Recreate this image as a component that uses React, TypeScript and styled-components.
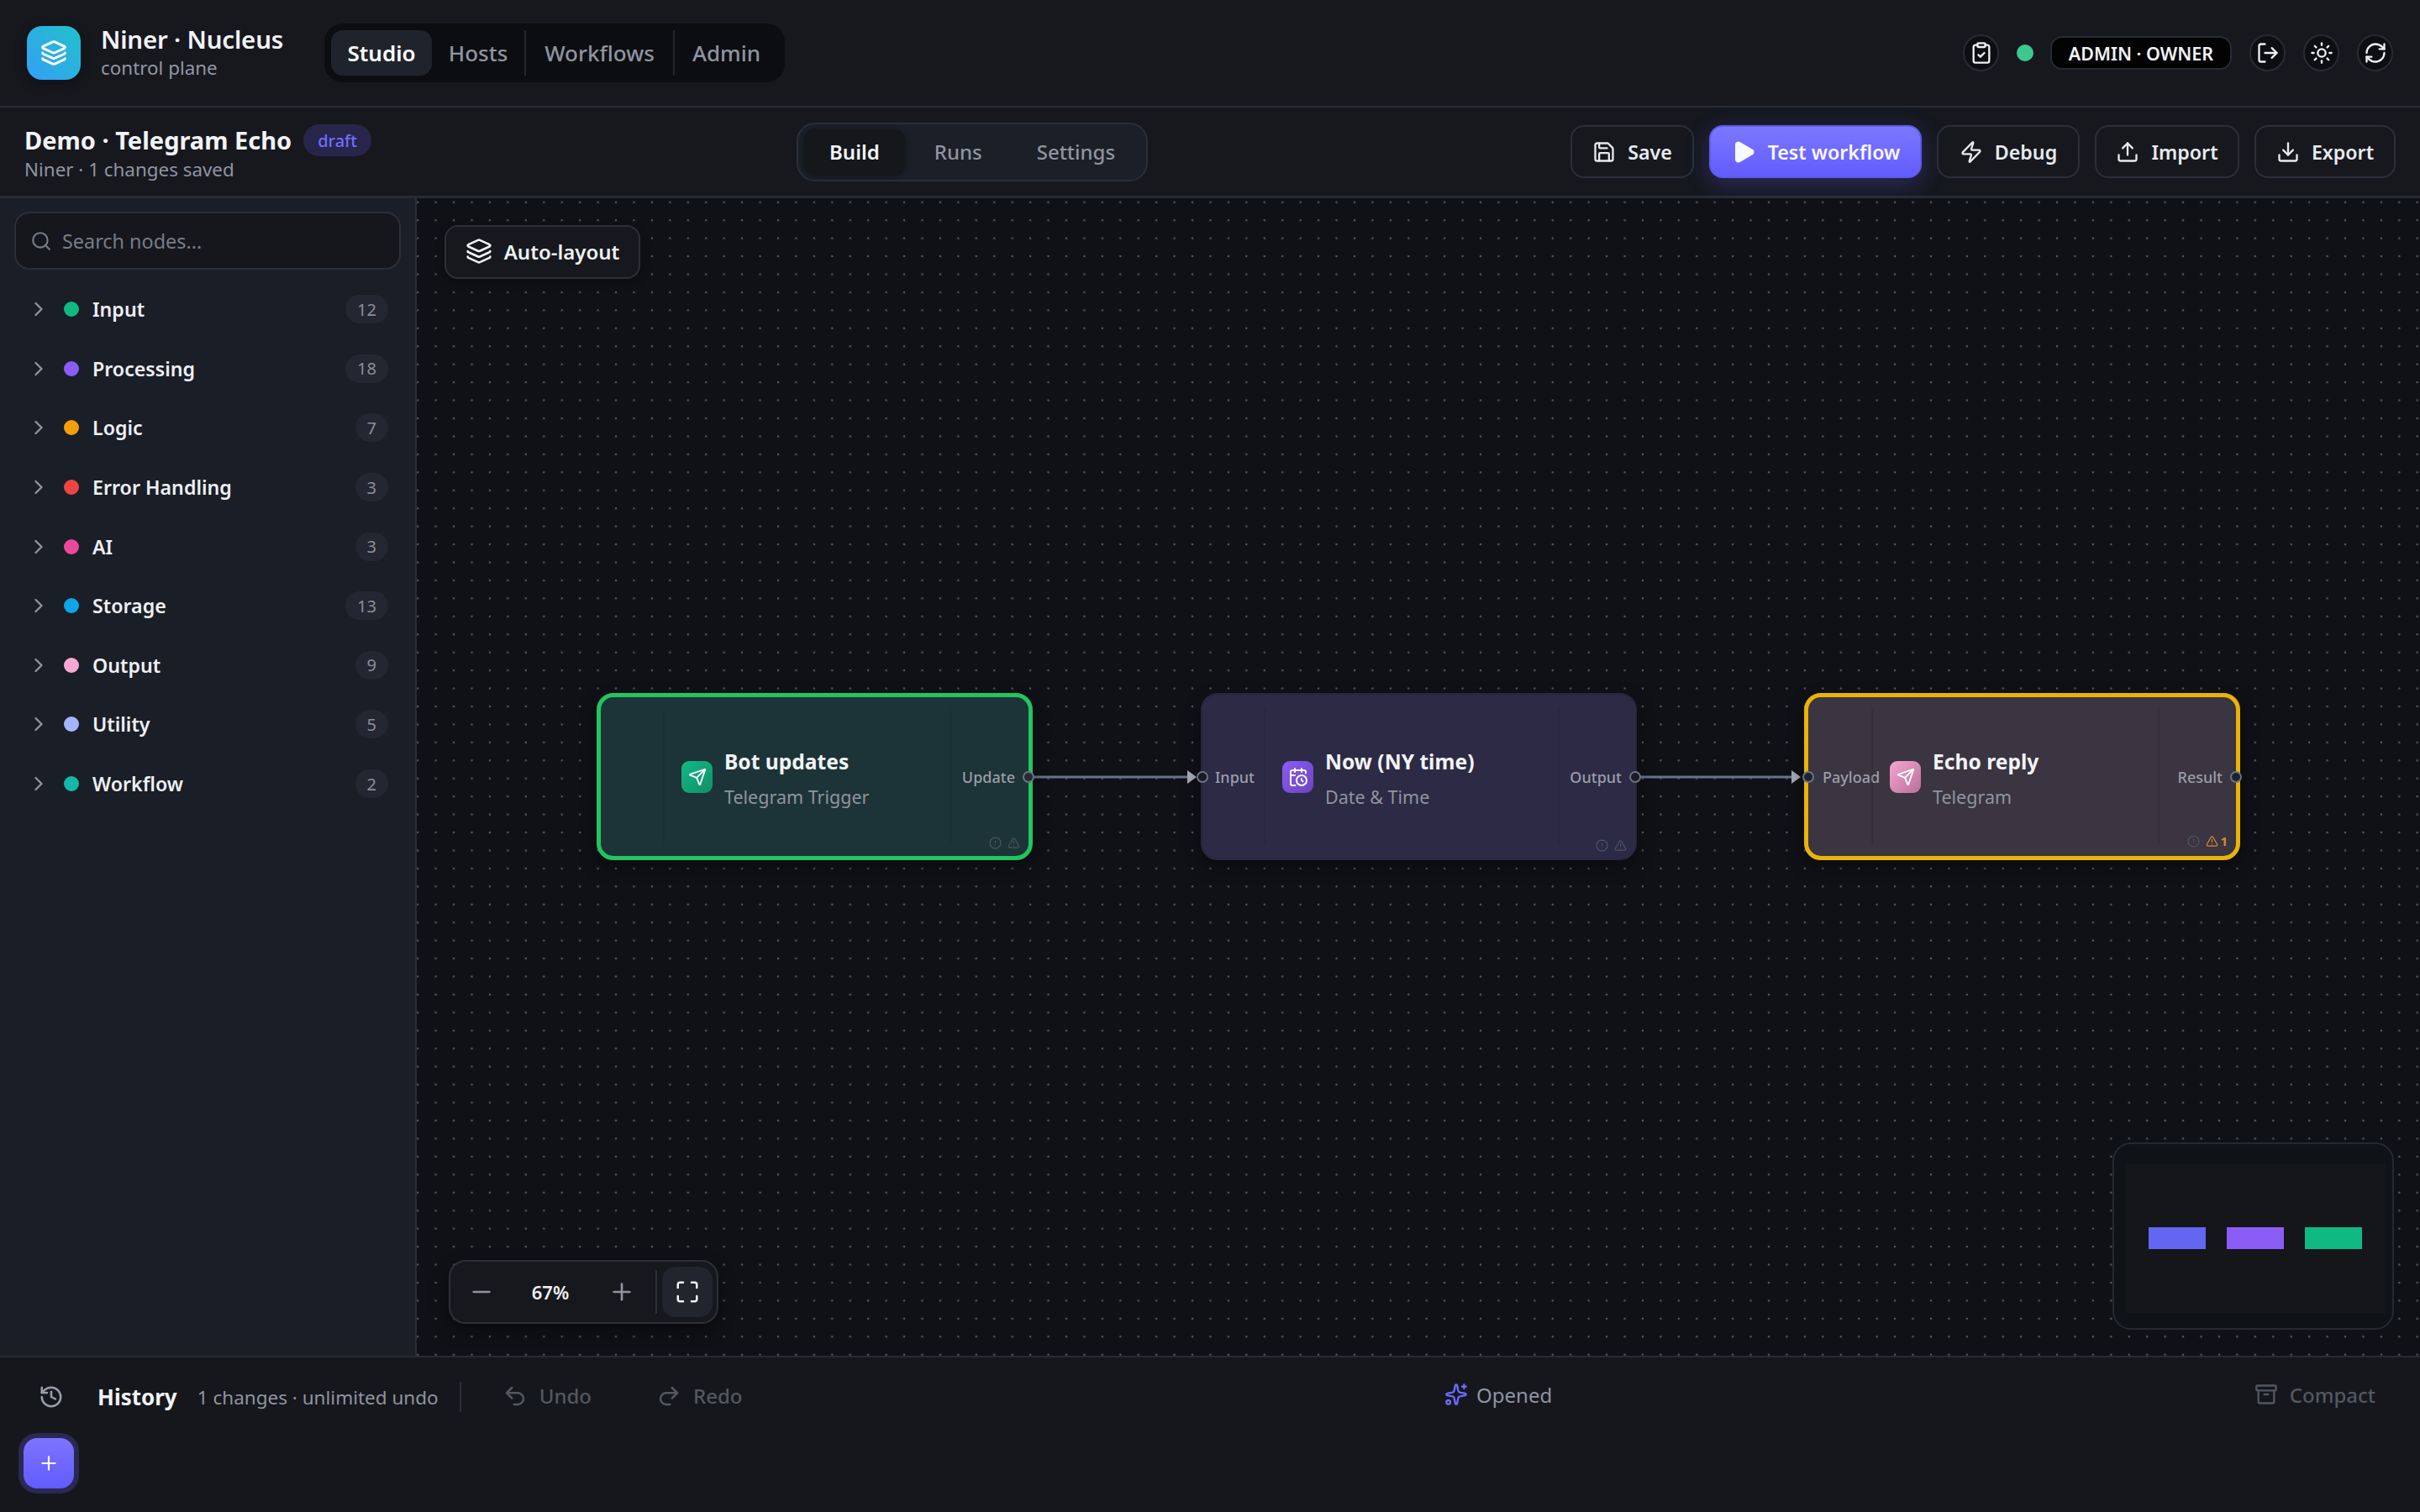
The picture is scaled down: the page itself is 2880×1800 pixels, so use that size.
import React from "react";
import styled, { createGlobalStyle } from "styled-components";
import {
  Layers, ClipboardCheck, LogOut, Sun, RefreshCw, Save, Play, Zap, Upload, Download, Search,
  ChevronRight, Send, CalendarClock, OctagonAlert, TriangleAlert, Minus, Plus, Maximize,
  History as HistoryIcon, Undo2, Redo2, Sparkles, Archive,
} from "lucide-react";

const Global = createGlobalStyle`
  html, body { margin: 0; padding: 0; background: #15171c; }
  body { font-family: "Noto Sans", "Open Sans", sans-serif; color: #eef0f4; overflow: hidden; }
  * { box-sizing: border-box; }
`;

const Page = styled.div`
  width: 2880px;
  height: 1800px;
  display: flex;
  flex-direction: column;
  background: #16181e;
`;

const TopBar = styled.header`
  height: 128px;
  flex: none;
  display: flex;
  align-items: center;
  padding: 0 32px;
  border-bottom: 2px solid #272b34;
`;

const LogoMark = styled.div`
  width: 64px;
  height: 64px;
  border-radius: 18px;
  background: linear-gradient(45deg, #33a0f5, #22c0cc);
  display: flex;
  align-items: center;
  justify-content: center;
  color: #fff;
  box-shadow: 0 4px 14px rgba(0, 0, 0, 0.35);
`;

const Brand = styled.div`
  margin-left: 24px;
  width: 266px;
  display: flex;
  flex-direction: column;
`;

const BrandName = styled.div`
  font-size: 29.5px;
  font-weight: 600;
  line-height: 36px;
  letter-spacing: -0.2px;
  color: #f2f3f6;
`;

const BrandSub = styled.div`
  font-size: 22.4px;
  line-height: 32px;
  color: #9297a2;
`;

const NavPill = styled.nav`
  width: 548px;
  height: 70px;
  padding: 8px;
  display: flex;
  align-items: stretch;
  border-radius: 22px;
  background: #0c0d10;
`;

const NavItem = styled.div<{ $active?: boolean; $w: number; $sep?: boolean }>`
  width: ${(p) => p.$w}px;
  display: flex;
  align-items: center;
  justify-content: center;
  font-size: 26px;
  font-weight: ${(p) => (p.$active ? 600 : 500)};
  color: ${(p) => (p.$active ? "#ffffff" : "#8f94a0")};
  background: ${(p) => (p.$active ? "#1f232c" : "transparent")};
  border-radius: 14px;
  border-right: ${(p) => (p.$sep ? "2px solid #23262d" : "none")};
  ${(p) => (p.$sep ? "border-radius: 0;" : "")}
`;

const Spacer = styled.div`
  flex: 1;
`;

const RoundIcon = styled.div`
  width: 43px;
  height: 44px;
  border-radius: 22px;
  background: #0d0e12;
  border: 2px solid #272b34;
  display: flex;
  align-items: center;
  justify-content: center;
  color: #eef0f4;
`;

const StatusDot = styled.div`
  width: 20px;
  height: 20px;
  border-radius: 50%;
  background: #3fc88c;
  margin: 0 20px 0 21px;
`;

const RoleBadge = styled.div`
  height: 40px;
  width: 216px;
  border-radius: 14px;
  background: #030304;
  border: 2px solid #272b34;
  display: flex;
  align-items: center;
  justify-content: center;
  font-size: 21.5px;
  font-weight: 600;
  color: #f2f3f6;
  margin-right: 21px;
`;

const TopIcons = styled.div`
  display: flex;
  gap: 21px;
`;

const SubBar = styled.div`
  height: 108px;
  flex: none;
  display: flex;
  align-items: center;
  padding: 0 29px;
  border-bottom: 3px solid #272b34;
`;

const DocInfo = styled.div`
  width: 919px;
  margin-top: 3px;
  display: flex;
  flex-direction: column;
`;

const DocTitleRow = styled.div`
  display: flex;
  align-items: center;
  gap: 14px;
`;

const DocTitle = styled.div`
  font-size: 29px;
  font-weight: 700;
  line-height: 40px;
  color: #f2f3f6;
`;

const DraftBadge = styled.div`
  height: 38px;
  padding: 0 17px;
  border-radius: 19px;
  background: #27264a;
  color: #716dff;
  font-size: 20px;
  font-weight: 500;
  display: flex;
  align-items: center;
`;

const DocSub = styled.div`
  font-size: 22.4px;
  line-height: 30px;
  color: #8f94a0;
`;

const Tabs = styled.div`
  height: 70px;
  padding: 5px 6px;
  border-radius: 22px;
  background: #1b1f27;
  border: 2px solid #2b2f38;
  display: flex;
  gap: 3px;
  align-items: stretch;
`;

const Tab = styled.div<{ $active?: boolean }>`
  padding: 0 31px;
  display: flex;
  align-items: center;
  justify-content: center;
  font-size: 24px;
  font-weight: ${(p) => (p.$active ? 600 : 500)};
  color: ${(p) => (p.$active ? "#f5f6f8" : "#8f94a0")};
  background: ${(p) => (p.$active ? "#15171b" : "transparent")};
  border-radius: 16px;
  box-shadow: ${(p) => (p.$active ? "0 2px 6px rgba(0, 0, 0, 0.25)" : "none")};
`;

const Actions = styled.div`
  margin-left: auto;
  display: flex;
  gap: 18px;
`;

const ActionBtn = styled.div<{ $primary?: boolean; $w: number }>`
  width: ${(p) => p.$w}px;
  height: 63px;
  border-radius: 16px;
  display: flex;
  align-items: center;
  justify-content: center;
  gap: 14px;
  font-size: 23.2px;
  font-weight: 600;
  color: ${(p) => (p.$primary ? "#f8f8ff" : "#e8eaef")};
  background: ${(p) => (p.$primary ? "linear-gradient(180deg, #7d78ff, #615cff)" : "#16181e")};
  border: 2px solid ${(p) => (p.$primary ? "#5f5ae8" : "#2b2f38")};
  box-shadow: ${(p) => (p.$primary ? "0 8px 28px rgba(99, 92, 255, 0.28)" : "none")};
`;

const Main = styled.div`
  flex: 1;
  min-height: 0;
  display: flex;
`;

const Sidebar = styled.aside`
  width: 496px;
  flex: none;
  background: #1a1e27;
  border-right: 2px solid #2a2e37;
  padding: 16px 17px 0 17px;
`;

const SearchBox = styled.div`
  height: 69px;
  width: 460px;
  border-radius: 18px;
  background: #15171c;
  border: 2px solid #2b2f38;
  display: flex;
  align-items: center;
  gap: 12px;
  padding: 0 17px;
  font-size: 23.4px;
  color: #777c87;
  margin-bottom: 12px;
`;

const CatList = styled.div`
  display: flex;
  flex-direction: column;
`;

const CatRow = styled.div`
  height: 70.6px;
  display: flex;
  align-items: center;
  padding: 0 15px;
  color: #8f94a0;
`;

const Dot = styled.div<{ $c: string }>`
  width: 18px;
  height: 18px;
  border-radius: 50%;
  background: ${(p) => p.$c};
  margin-left: 16px;
  margin-right: 16px;
`;

const CatLabel = styled.div`
  flex: 1;
  font-size: 23.2px;
  font-weight: 600;
  color: #eef0f4;
`;

const CatCount = styled.div`
  height: 34px;
  min-width: 39px;
  padding: 0 14px;
  border-radius: 17px;
  background: #232731;
  color: #8a8f9a;
  font-size: 20px;
  display: flex;
  align-items: center;
  justify-content: center;
`;

const Canvas = styled.main`
  position: relative;
  flex: 1;
  min-width: 0;
  overflow: hidden;
  background-color: #101116;
  background-image: radial-gradient(circle, #555860 1.2px, transparent 1.6px);
  background-size: 21.44px 21.44px;
  background-position: -9.5px -6px;
`;

const AutoLayout = styled.div`
  position: absolute;
  left: 33px;
  top: 32px;
  width: 233px;
  height: 64px;
  padding-bottom: 2px;
  border-radius: 16px;
  background: #16181e;
  border: 2px solid #2b2f38;
  display: flex;
  align-items: center;
  justify-content: center;
  gap: 14px;
  font-size: 24px;
  font-weight: 600;
  color: #f0f1f4;
  box-shadow: 0 4px 12px rgba(0, 0, 0, 0.3);
`;

const NodeCard = styled.div<{ $x: number; $bg: string; $border: string; $bw: number; $cols: string }>`
  position: absolute;
  left: ${(p) => p.$x}px;
  top: 589px;
  width: 519px;
  height: 199px;
  border-radius: 20px;
  background: ${(p) => p.$bg};
  border: ${(p) => p.$bw}px solid ${(p) => p.$border};
  box-shadow: 0 8px 20px rgba(0, 0, 0, 0.35);
  padding: ${(p) => 19 - p.$bw}px 0;
  display: grid;
  grid-template-columns: ${(p) => p.$cols};
`;

const PortCol = styled.div<{ $right?: boolean; $inset: number }>`
  display: flex;
  align-items: center;
  justify-content: ${(p) => (p.$right ? "flex-end" : "flex-start")};
  padding: ${(p) => (p.$right ? `0 ${p.$inset}px 0 0` : `0 0 0 ${p.$inset}px`)};
  font-size: 18px;
  font-weight: 500;
  color: #9a9ea9;
`;

const NodeMain = styled.div`
  border-left: 2px solid rgba(30, 30, 40, 0.22);
  border-right: 2px solid rgba(30, 30, 40, 0.22);
  padding-left: 20px;
  display: flex;
  align-items: center;
  gap: 14px;
`;

const NodeIcon = styled.div<{ $bg: string }>`
  width: 37px;
  height: 38px;
  flex: none;
  border-radius: 9px;
  background: ${(p) => p.$bg};
  display: flex;
  align-items: center;
  justify-content: center;
  color: #fff;
`;

const NodeText = styled.div`
  display: flex;
  flex-direction: column;
  margin-top: 4px;
`;

const NodeTitle = styled.div`
  font-size: 24.6px;
  font-weight: 700;
  line-height: 36px;
  color: #f2f3f6;
  margin-bottom: 8px;
`;

const NodeSub = styled.div`
  font-size: 21.5px;
  line-height: 32px;
  color: #8f94a0;
`;

const NodeFlags = styled.div`
  position: absolute;
  right: 10px;
  bottom: 8px;
  display: flex;
  align-items: center;
  gap: 7px;
  color: #4b5560;
`;

const WarnFlag = styled.span`
  display: flex;
  align-items: center;
  gap: 2px;
  color: #d98a2b;
  font-size: 15px;
  font-weight: 700;
`;

const Port = styled.div<{ $side: "in" | "out"; $fill: string }>`
  position: absolute;
  top: 50%;
  ${(p) => (p.$side === "in" ? "left: -7px" : "right: -7px")};
  width: 14px;
  height: 14px;
  margin-top: -7px;
  border-radius: 50%;
  background: ${(p) => p.$fill};
  border: 2.5px solid #6b7280;
`;

const Edge = styled.svg<{ $x: number }>`
  position: absolute;
  left: ${(p) => p.$x}px;
  top: 679px;
  width: 195px;
  height: 20px;
  overflow: visible;
`;

const ZoomBar = styled.div`
  position: absolute;
  left: 38px;
  top: 1264px;
  width: 321px;
  height: 76px;
  border-radius: 20px;
  background: #16181e;
  border: 2px solid #2b2f38;
  box-shadow: 0 8px 20px rgba(0, 0, 0, 0.4);
  display: grid;
  grid-template-columns: 74px 90px 80px 1fr;
  align-items: center;
  color: #8f94a0;
`;

const ZoomCell = styled.div`
  display: flex;
  align-items: center;
  justify-content: center;
`;

const ZoomValue = styled(ZoomCell)`
  font-size: 22px;
  font-weight: 600;
  color: #f0f1f4;
`;

const FitWrap = styled.div`
  display: flex;
  align-items: center;
  border-left: 2px solid #2b2f38;
  height: 52px;
  padding-left: 6px;
`;

const FitBtn = styled.div`
  width: 60px;
  height: 60px;
  flex: none;
  border-radius: 16px;
  background: #22252e;
  color: #f4f5f7;
  display: flex;
  align-items: center;
  justify-content: center;
`;

const MiniMap = styled.div`
  position: absolute;
  left: 2018px;
  top: 1124px;
  width: 335px;
  height: 223px;
  border-radius: 22px;
  background: #0f1216;
  border: 2px solid #252931;
  display: flex;
  align-items: center;
`;

const MiniInner = styled.div`
  margin-left: 13px;
  width: 310px;
  height: 178px;
  margin-top: 4px;
  background: #14161a;
  display: flex;
  gap: 25px;
  padding: 76px 0 0 28px;
`;

const MiniBlock = styled.div<{ $c: string }>`
  width: 68px;
  height: 26px;
  background: ${(p) => p.$c};
`;

const BottomBar = styled.footer`
  position: relative;
  height: 186px;
  flex: none;
  border-top: 2px solid #272b34;
  background: #15171c;
  padding: 29px 53px 0 46px;
  display: flex;
  justify-content: space-between;
  align-items: flex-start;
`;

const HistLeft = styled.div`
  display: flex;
  align-items: center;
  height: 36px;
`;

const HistTitle = styled.div`
  margin-left: 40px;
  font-size: 26px;
  font-weight: 700;
  color: #f2f3f6;
`;

const HistMeta = styled.div`
  margin-left: 24px;
  font-size: 22.5px;
  color: #8f94a0;
`;

const VLine = styled.div`
  width: 2px;
  height: 36px;
  background: #2b2f38;
  margin: 0 49px 0 25px;
`;

const GhostBtn = styled.div<{ $ml?: number }>`
  display: flex;
  align-items: center;
  gap: 14px;
  font-size: 24px;
  font-weight: 500;
  color: #535760;
  margin-top: -3px;
  margin-left: ${(p) => p.$ml ?? 0}px;
`;

const OpenedWrap = styled.div`
  display: flex;
  align-items: center;
  height: 36px;
  margin-top: -3px;
  gap: 10px;
  font-size: 24px;
  color: #8f94a0;
  svg { color: #6f6bff; }
`;

const CompactWrap = styled(GhostBtn)`
  height: 36px;
`;

const Fab = styled.div`
  position: absolute;
  left: 28px;
  top: 96px;
  width: 60px;
  height: 60px;
  border-radius: 16px;
  background: linear-gradient(180deg, #7d74ff, #625bff);
  box-shadow: 0 0 0 6px #2a2952;
  color: #fff;
  display: flex;
  align-items: center;
  justify-content: center;
`;

const cats: [string, string, number][] = [
  ["Input", "#10b981", 12],
  ["Processing", "#8b5cf6", 18],
  ["Logic", "#f59e0b", 7],
  ["Error Handling", "#ef4444", 3],
  ["AI", "#ec4899", 3],
  ["Storage", "#0ea5e9", 13],
  ["Output", "#f9a8d4", 9],
  ["Utility", "#a5b4fc", 5],
  ["Workflow", "#14b8a6", 2],
];

type NodeDef = {
  x: number; bg: string; border: string; bw: number; cols: string; title: string; sub: string;
  left: string; right: string; leftInset: number; rightInset: number; portFill: string;
  icon: React.ReactNode; iconBg: string; warn?: boolean; port: boolean;
};

const nodes: NodeDef[] = [
  { x: 214, bg: "#1c3437", border: "#22c55e", bw: 5, cols: "74px 1fr 92px", title: "Bot updates", sub: "Telegram Trigger", left: "", right: "Update", leftInset: 0, rightInset: 16, portFill: "#262b35", icon: <Send size={22} />, iconBg: "linear-gradient(135deg,#14b886,#0f8f68)", port: false },
  { x: 933, bg: "#2c2a45", border: "#282640", bw: 2, cols: "73px 1fr 90px", title: "Now (NY time)", sub: "Date & Time", left: "Input", right: "Output", leftInset: 15, rightInset: 16, portFill: "#1a1b26", icon: <CalendarClock size={24} />, iconBg: "linear-gradient(135deg,#8b5cf6,#6a45bd)", port: true },
  { x: 1651, bg: "#3b3441", border: "#eab308", bw: 5, cols: "75px 1fr 91px", title: "Echo reply", sub: "Telegram", left: "Payload", right: "Result", leftInset: 17, rightInset: 16, portFill: "#1d2230", icon: <Send size={22} />, iconBg: "linear-gradient(135deg,#f4a6d0,#b9709a)", warn: true, port: true },
];

function Arrow({ x }: { x: number }) {
  return (
    <Edge $x={x} viewBox="0 0 195 20">
      <path d="M0 10 H186" stroke="#64748b" strokeWidth="3" fill="none" />
      <path d="M184 2 L195 10 L184 18 Z" fill="#a5a9b2" />
    </Edge>
  );
}

export default function App() {
  return (
    <Page>
      <Global />
      <TopBar>
        <LogoMark><Layers size={32} strokeWidth={2.2} /></LogoMark>
        <Brand>
          <BrandName>Niner · Nucleus</BrandName>
          <BrandSub>control plane</BrandSub>
        </Brand>
        <NavPill>
          <NavItem $active $w={120}>Studio</NavItem>
          <NavItem $w={112} $sep>Hosts</NavItem>
          <NavItem $w={177} $sep>Workflows</NavItem>
          <NavItem $w={123}>Admin</NavItem>
        </NavPill>
        <Spacer />
        <RoundIcon><ClipboardCheck size={28} /></RoundIcon>
        <StatusDot />
        <RoleBadge>ADMIN · OWNER</RoleBadge>
        <TopIcons>
          <RoundIcon><LogOut size={28} /></RoundIcon>
          <RoundIcon><Sun size={28} /></RoundIcon>
          <RoundIcon><RefreshCw size={28} /></RoundIcon>
        </TopIcons>
      </TopBar>
      <SubBar>
        <DocInfo>
          <DocTitleRow>
            <DocTitle>Demo · Telegram Echo</DocTitle>
            <DraftBadge>draft</DraftBadge>
          </DocTitleRow>
          <DocSub>Niner · 1 changes saved</DocSub>
        </DocInfo>
        <Tabs>
          <Tab $active>Build</Tab>
          <Tab>Runs</Tab>
          <Tab>Settings</Tab>
        </Tabs>
        <Actions>
          <ActionBtn $w={147}><Save size={28} />Save</ActionBtn>
          <ActionBtn $primary $w={253}><Play size={30} fill="currentColor" />Test workflow</ActionBtn>
          <ActionBtn $w={170}><Zap size={28} />Debug</ActionBtn>
          <ActionBtn $w={172}><Upload size={28} />Import</ActionBtn>
          <ActionBtn $w={168}><Download size={28} />Export</ActionBtn>
        </Actions>
      </SubBar>
      <Main>
        <Sidebar>
          <SearchBox><Search size={26} />Search nodes...</SearchBox>
          <CatList>
            {cats.map(([name, color, count]) => (
              <CatRow key={name}>
                <ChevronRight size={28} />
                <Dot $c={color} />
                <CatLabel>{name}</CatLabel>
                <CatCount>{count}</CatCount>
              </CatRow>
            ))}
          </CatList>
        </Sidebar>
        <Canvas>
          <AutoLayout><Layers size={32} />Auto-layout</AutoLayout>
          <Arrow x={733} />
          <Arrow x={1452} />
          {nodes.map((n) => (
            <NodeCard key={n.title} $x={n.x} $bg={n.bg} $border={n.border} $bw={n.bw} $cols={n.cols}>
              <PortCol $inset={n.leftInset}>{n.left}</PortCol>
              <NodeMain>
                <NodeIcon $bg={n.iconBg}>{n.icon}</NodeIcon>
                <NodeText>
                  <NodeTitle>{n.title}</NodeTitle>
                  <NodeSub>{n.sub}</NodeSub>
                </NodeText>
              </NodeMain>
              <PortCol $right $inset={n.rightInset}>{n.right}</PortCol>
              {n.port && <Port $side="in" $fill={n.portFill} />}
              <Port $side="out" $fill={n.portFill} />
              <NodeFlags>
                <OctagonAlert size={15} />
                {n.warn ? <WarnFlag><TriangleAlert size={15} />1</WarnFlag> : <TriangleAlert size={15} />}
              </NodeFlags>
            </NodeCard>
          ))}
          <ZoomBar>
            <ZoomCell><Minus size={32} /></ZoomCell>
            <ZoomValue>67%</ZoomValue>
            <ZoomCell><Plus size={32} /></ZoomCell>
            <FitWrap><FitBtn><Maximize size={30} /></FitBtn></FitWrap>
          </ZoomBar>
          <MiniMap>
            <MiniInner>
              <MiniBlock $c="#6366f1" />
              <MiniBlock $c="#8b5cf6" />
              <MiniBlock $c="#10b981" />
            </MiniInner>
          </MiniMap>
        </Canvas>
      </Main>
      <BottomBar>
        <HistLeft>
          <HistoryIcon size={30} color="#9a9ea9" />
          <HistTitle>History</HistTitle>
          <HistMeta>1 changes · unlimited undo</HistMeta>
          <VLine />
          <GhostBtn><Undo2 size={30} />Undo</GhostBtn>
          <GhostBtn $ml={77}><Redo2 size={30} />Redo</GhostBtn>
        </HistLeft>
        <OpenedWrap><Sparkles size={28} />Opened</OpenedWrap>
        <CompactWrap><Archive size={28} />Compact</CompactWrap>
        <Fab><Plus size={26} /></Fab>
      </BottomBar>
    </Page>
  );
}
